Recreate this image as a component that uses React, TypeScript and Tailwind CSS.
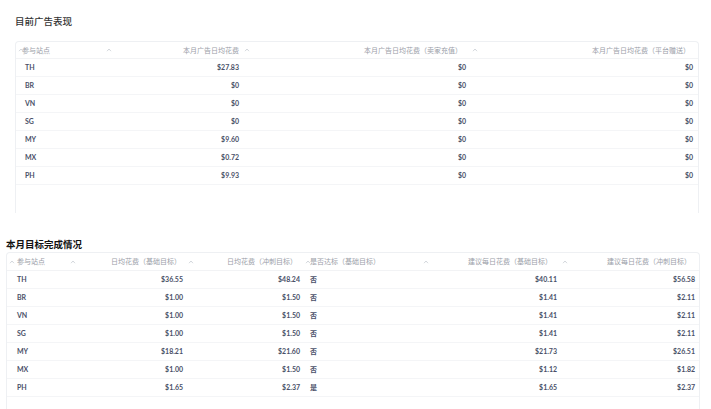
import React from 'react';

type Col = { title: string; align: 'left' | 'right'; pad: string; hpad: string };

const Caret: React.FC = () => (
  <svg width="6" height="4" viewBox="0 0 6 4" className="absolute left-[2px] top-1/2 -translate-y-1/2">
    <polyline points="1,3.2 3,1 5,3.2" fill="none" stroke="#cfd2d8" strokeWidth="0.9" />
  </svg>
);

const perfCols: Col[] = [
  { title: '参与站点', align: 'left', pad: 'pl-[9px]', hpad: 'pl-[6px]' },
  { title: '本月广告日均花费', align: 'right', pad: 'pr-[3px]', hpad: 'pr-[3px]' },
  { title: '本月广告日均花费（卖家充值）', align: 'right', pad: 'pr-[4px]', hpad: 'pr-[8px]' },
  { title: '本月广告日均花费（平台赠送）', align: 'right', pad: 'pr-[5px]', hpad: 'pr-[8px]' },
];

const perfRows = [
  ['TH', '$27.83', '$0', '$0'],
  ['BR', '$0', '$0', '$0'],
  ['VN', '$0', '$0', '$0'],
  ['SG', '$0', '$0', '$0'],
  ['MY', '$9.60', '$0', '$0'],
  ['MX', '$0.72', '$0', '$0'],
  ['PH', '$9.93', '$0', '$0'],
];

const goalCols: Col[] = [
  { title: '参与站点', align: 'left', pad: 'pl-[10px]', hpad: 'pl-[10px]' },
  { title: '日均花费（基础目标）', align: 'right', pad: 'pr-[3px]', hpad: 'pr-[5px]' },
  { title: '日均花费（冲刺目标）', align: 'right', pad: 'pr-[3px]', hpad: 'pr-[6px]' },
  { title: '是否达标（基础目标）', align: 'left', pad: 'pl-[7px]', hpad: 'pl-[7px]' },
  { title: '建议每日花费（基础目标）', align: 'right', pad: 'pr-[3px]', hpad: 'pr-[8px]' },
  { title: '建议每日花费（冲刺目标）', align: 'right', pad: 'pr-[4px]', hpad: 'pr-[8px]' },
];

const goalRows = [
  ['TH', '$36.55', '$48.24', '否', '$40.11', '$56.58'],
  ['BR', '$1.00', '$1.50', '否', '$1.41', '$2.11'],
  ['VN', '$1.00', '$1.50', '否', '$1.41', '$2.11'],
  ['SG', '$1.00', '$1.50', '否', '$1.41', '$2.11'],
  ['MY', '$18.21', '$21.60', '否', '$21.73', '$26.51'],
  ['MX', '$1.00', '$1.50', '否', '$1.12', '$1.82'],
  ['PH', '$1.65', '$2.37', '是', '$1.65', '$2.37'],
];

const Table: React.FC<{ cols: Col[]; rows: string[][]; grid: string; headH: string; className: string }> = ({
  cols,
  rows,
  grid,
  headH,
  className,
}) => (
  <div className={`border-x border-t border-[#eef0f3] rounded-t-[4px] overflow-hidden ${className}`}>
    <div className={`grid ${grid} ${headH} border-b border-[#f2f3f5]`}>
      {cols.map((c) => (
        <div
          key={c.title}
          className={`relative flex items-center text-[7px] text-[#9a9ea8] ${c.hpad} ${
            c.align === 'right' ? 'justify-end' : 'justify-start'
          }`}
        >
          <Caret />
          <span className="whitespace-nowrap">{c.title}</span>
        </div>
      ))}
    </div>
    {rows.map((r) => (
      <div key={r[0]} className={`grid ${grid} h-[18px] border-b border-[#f4f5f7]`}>
        {r.map((v, i) => (
          <div
            key={i}
            className={`flex items-center text-[7px] font-bold text-[#4a5068] ${cols[i].pad} ${
              cols[i].align === 'right' ? 'justify-end' : 'justify-start'
            }`}
          >
            {v}
          </div>
        ))}
      </div>
    ))}
  </div>
);

export default function App() {
  return (
    <div
      className="w-[711px] h-[409px] overflow-hidden bg-white"
      style={{ fontFamily: 'Lato, "Noto Sans CJK SC", sans-serif' }}
    >
      <div className="pl-[15px] pt-[15px]">
        <h2 className="h-[14px] leading-[14px] text-[9.5px] font-medium text-[#333]">目前广告表现</h2>
        <Table
          cols={perfCols}
          rows={perfRows}
          grid="grid-cols-[88px_138px_228px_1fr]"
          headH="h-[17px]"
          className="mt-[12px] w-[684px] h-[172px]"
        />
      </div>
      <div className="pl-[6px] pt-[25px]">
        <h2 className="h-[14px] leading-[14px] text-[9.5px] font-bold text-[#111]">本月目标完成情况</h2>
        <Table
          cols={goalCols}
          rows={goalRows}
          grid="grid-cols-[61px_118px_117px_118px_139px_1fr]"
          headH="h-[18px]"
          className="w-[694px] h-[160px]"
        />
      </div>
    </div>
  );
}
